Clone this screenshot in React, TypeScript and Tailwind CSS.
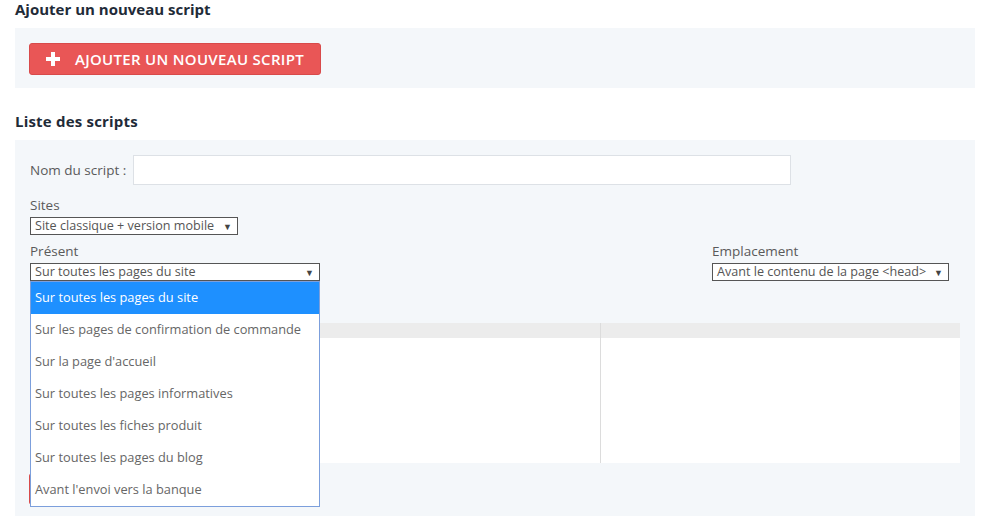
import React from "react";

const options = [
  "Sur toutes les pages du site",
  "Sur les pages de confirmation de commande",
  "Sur la page d'accueil",
  "Sur toutes les pages informatives",
  "Sur toutes les fiches produit",
  "Sur toutes les pages du blog",
  "Avant l'envoi vers la banque",
];

function Select({ value, className }: { value: string; className: string }) {
  return (
    <div
      className={`flex items-center justify-between h-[18px] border border-[#555] bg-white pl-[4px] pr-[5px] text-[12.6px] leading-none text-[#555] whitespace-nowrap overflow-hidden ${className}`}
    >
      <span className="whitespace-nowrap">{value}</span>
      <span className="text-[9px] text-[#444] ml-[6px] shrink-0">▼</span>
    </div>
  );
}

export default function App() {
  return (
    <div
      className="w-[983px] h-[516px] overflow-hidden pl-[15px] pr-[8px] bg-white text-[#555]"
      style={{ fontFamily: '"Open Sans", "Liberation Sans", sans-serif' }}
    >
      <h2 className="text-[15px] font-bold leading-[18px] text-[#1f2b38] pt-0 mb-[10px]">
        Ajouter un nouveau script
      </h2>
      <div className="bg-[#f4f7fa] h-[60px] pl-[14px] pt-[15px]">
        <button className="flex items-center h-[32px] w-[292px] rounded-[3px] bg-[#e95656] border border-[#d84a4a] pl-[16px] text-white">
          <svg width="14" height="14" viewBox="0 0 14 14" className="mr-[15px]">
            <rect x="5" y="0" width="4" height="14" fill="#fff" />
            <rect x="0" y="5" width="14" height="4" fill="#fff" />
          </svg>
          <span className="text-[15px] font-semibold tracking-[0.3px]">AJOUTER UN NOUVEAU SCRIPT</span>
        </button>
      </div>

      <h2 className="text-[15px] font-bold leading-[18px] text-[#1f2b38] mt-[24px] mb-[10px] tracking-[0.2px]">
        Liste des scripts
      </h2>
      <div className="bg-[#f4f7fa] px-[15px] pt-[15px] pb-[20px]">
        <div className="flex items-center h-[30px]">
          <label className="text-[13.5px] text-[#5a5a5a] w-[103px]">Nom du script :</label>
          <div className="h-[30px] w-[658px] bg-white border border-[#dde1e6]" />
        </div>

        <div className="mt-[12px] text-[13.5px] leading-[16px] text-[#5a5a5a]">Sites</div>
        <Select value="Site classique + version mobile" className="w-[208px] mt-[4px]" />

        <div className="flex mt-[8px]">
          <div className="w-[682px]">
            <div className="text-[13.5px] leading-[16px] text-[#5a5a5a]">Présent</div>
            <div className="relative mt-[4px]">
              <Select value="Sur toutes les pages du site" className="w-[290px]" />
              <div className="absolute left-0 top-[18px] w-[290px] bg-white border border-[#7c9fdc] z-10">
                {options.map((o, i) => (
                  <div
                    key={o}
                    className={`h-[32px] flex items-center pl-[4px] text-[12.8px] whitespace-nowrap ${
                      i === 0 ? "bg-[#1e90ff] text-white" : "text-[#666]"
                    }`}
                  >
                    {o}
                  </div>
                ))}
              </div>
            </div>
          </div>
          <div>
            <div className="text-[13.5px] leading-[16px] text-[#5a5a5a]">Emplacement</div>
            <Select value="Avant le contenu de la page <head>" className="w-[237px] mt-[4px]" />
          </div>
        </div>

        <div className="mt-[42px] flex">
          <div className="w-[571px] border-r border-[#dcdcdc]">
            <div className="h-[15px] bg-[#ececec]" />
            <div className="h-[125px] bg-white" />
          </div>
          <div className="flex-1">
            <div className="h-[15px] bg-[#ececec]" />
            <div className="h-[125px] bg-white" />
          </div>
        </div>

        <button className="mt-[10px] -ml-[1px] h-[32px] w-[200px] rounded-[3px] bg-[#e95656] border border-[#d84a4a]" />
      </div>
    </div>
  );
}
